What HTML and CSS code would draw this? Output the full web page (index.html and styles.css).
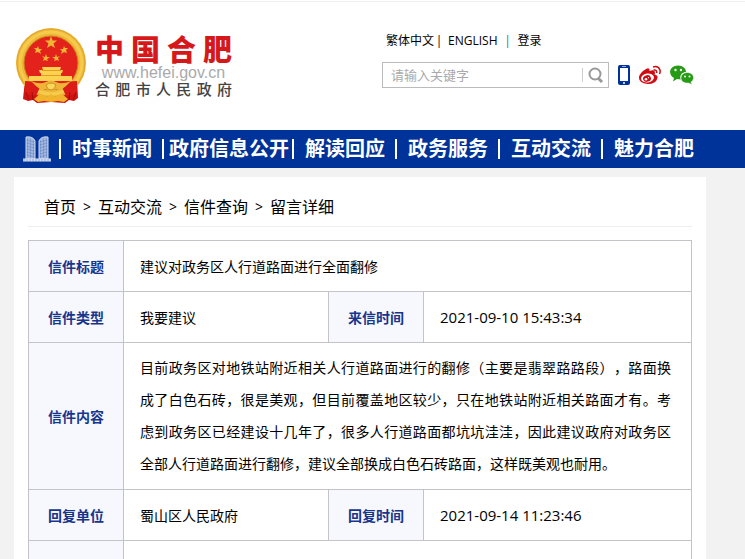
FILE: index.html
```html
<!DOCTYPE html>
<html lang="zh-CN">

<head>
    <meta charset="UTF-8">
    <title>留言详细</title>
    <link rel="stylesheet" href="styles.css">
</head>

<body>
    <header class="header">
        <a href="#" class="logo">
            <svg class="emblem" viewBox="0 0 72 77" width="72" height="77" aria-hidden="true">
                <path d="M10 53 L8 72 L13 74 L18 73 L22 76 L36 75 L50 76 L54 73 L59 74 L63 71 L62 53 Z" fill="#cf1512" />
                <circle cx="36" cy="36" r="35" fill="#eeb93a" />
                <circle cx="36" cy="36" r="34" fill="none" stroke="#e0a52c" stroke-width="1" />
                <circle cx="36" cy="36" r="31" fill="none" stroke="#f6cb4c" stroke-width="3" />
                <circle cx="36" cy="36" r="27" fill="#e3231b" stroke="#c8851c" stroke-width="1" />
                <g fill="#f0b535">
                    <path d="M36 9 L37.500 13.500 L42 13.500 L38.500 16.500 L40 21 L36 18.500 L32 21 L33.500 16.500 L30 13.500 L34.500 13.500 Z" />
                    <path d="M23 19 L24 22 L27 22 L25 24 L26 27 L23 25 L20 26 L21 23 L19 21 L22 21 Z" />
                    <path d="M49 19 L48 22 L45 22 L47 24 L46 27 L49 25 L52 26 L51 23 L53 21 L50 21 Z" />
                    <path d="M31 27 L32 30 L35 30 L32 32 L33 34 L30 33 L28 34 L29 31 L27 29 L30 30 Z" />
                    <path d="M41 27 L40 30 L37 30 L40 32 L39 34 L42 33 L44 34 L43 31 L45 29 L42 30 Z" />
                </g>
                <g fill="#fbd351">
                    <path d="M27 40 H46 L45 43 H48 L47 46 H25 L24 43 H28 Z" />
                    <path d="M26 45 H46 V49 H57 V54 H14 V49 H26 Z" />
                </g>
                <path d="M27 43.500 H46 M26 48.500 H46" stroke="#e79a24" />
                <path d="M10 54 Q19 54 26 58 L21 69 L10 66 Z M62 54 Q53 54 46 58 L51 69 L62 66 Z" fill="#dc1c16" />
                <path d="M16 54 Q25 58 31 55 Q36 52 41 55 Q47 58 56 54 L51 59 L46 63 L41 62 L36 65 L31 62 L26 63 L21 59 Z" fill="#eeb536" />
                <path d="M31 58 Q36 54 41 58 L39 62 L36 63 L33 62 Z" fill="#fad65a" stroke="#cf8f28" />
                <path d="M19 72 L25 67 L32 70 L36 67 L40 70 L47 67 L53 72 L49 75 L43 74 L36 75 L29 74 L23 75 Z" fill="#f1b52d" />
                <path d="M11 65 L14 73 M17 65 L18 73 M61 65 L58 73 M55 65 L54 73" stroke="#a50d0c" />
            </svg>
            <span class="logo-text">
                <strong class="logo-name">中国合肥</strong>
                <span class="logo-url">www.hefei.gov.cn</span>
                <span class="logo-gov">合肥市人民政府</span>
            </span>
        </a>
        <div class="tools">
            <div class="top-links">
                <a href="#">繁体中文</a><span class="bar">|</span>
                <a href="#" class="english">ENGLISH</a><span class="bar blue">|</span>
                <a href="#">登录</a>
            </div>
            <div class="tool-row">
                <form class="search">
                    <input type="text" placeholder="请输入关键字" aria-label="请输入关键字">
                    <button type="submit" aria-label="搜索">
                        <svg viewBox="0 0 16 16" width="16" height="16" fill="none" stroke="#999" stroke-width="2">
                            <circle cx="7" cy="7" r="5.500" />
                            <path d="M10 11 L14 15" stroke-width="3" />
                        </svg>
                    </button>
                </form>
                <a href="#" class="mobile" aria-label="手机版">
                    <svg viewBox="0 0 12 20" width="12" height="20">
                        <rect width="12" height="20" rx="2" fill="#039" />
                        <rect x="2" y="3" width="8" height="13" fill="#fff" />
                        <path d="M4 1.500 H8" stroke="#9ab0dc" />
                        <circle cx="6" cy="18" r="1" fill="#fff" />
                    </svg>
                </a>
                <a href="#" class="weibo" aria-label="微博">
                    <svg viewBox="0 0 22 20" width="22" height="20">
                        <path d="M0 13 Q0 8 7 4 Q11 2 10.500 6 Q16 4 16 8 L15.500 9.500 Q19 10 18.500 13 Q17 19 8.500 19 Q0 18 0 13 Z" fill="#d00b12" />
                        <ellipse cx="8.500" cy="13" rx="6.500" ry="4.500" transform="rotate(-8 8.500 13)" fill="#fff" />
                        <ellipse cx="8" cy="13.500" rx="4" ry="3.300" transform="rotate(-20 8 13.500)" fill="#d00b12" />
                        <circle cx="7" cy="14.300" r="1.300" fill="#fff" />
                        <circle cx="9.500" cy="12.700" r=".6" fill="#fff" />
                        <path d="M14 2 Q19 0 21 5 Q21.500 7 20.500 9 M14.500 5 Q18 4.500 17.700 8" fill="none" stroke="#d00b12" stroke-width="1.500" />
                    </svg>
                </a>
                <a href="#" class="wechat" aria-label="微信">
                    <svg viewBox="0 0 24 20" width="24" height="20">
                        <path d="M8 0.500 C13 .5 16 3.500 16 7 C12 7 9 11 11 14.500 L7 14 L3 16.500 L4 13 C-3 9 0 .5 8 .5 Z" fill="#289b16" />
                        <path d="M17 7.500 C22 7.500 24 11 23.500 13.500 Q23 16 21 17 L22 19.500 L18.500 18 C13 18.500 11 15.500 11 13 Q11 8 17 7.500 Z" fill="#289b16" stroke="#fff" stroke-width=".5" />
                        <g fill="#fff">
                            <circle cx="5.500" cy="5" r="1.200" />
                            <circle cx="11" cy="5" r="1.200" />
                            <circle cx="15" cy="11.500" r="1" />
                            <circle cx="19.500" cy="11.500" r="1" />
                        </g>
                    </svg>
                </a>
            </div>
        </div>
    </header>

    <nav class="nav">
        <svg class="towers" viewBox="0 0 28 26" width="28" height="26" aria-hidden="true">
            <path d="M3 1 Q10 0 12 5 V23 H3 Z M25 1 Q18 0 16 5 V23 H25 Z" fill="#8ea6d4" stroke="#d0dbee" />
            <path d="M4 4 L11 6 M4 7 L11 9 M4 10 L11 12 M4 13 L11 15 M4 16 L11 18 M4 19 L11 21 M24 4 L17 6 M24 7 L17 9 M24 10 L17 12 M24 13 L17 15 M24 16 L17 18 M24 19 L17 21" stroke="#5c7cc0" />
            <path d="M6 1 V23 M9 2 V23 M22 1 V23 M19 2 V23" stroke="#b3c4e4" />
            <path d="M0 24 H28" stroke="#d5def0" stroke-width="3" />
            <path d="M0 24 H28" stroke="#8ea6d4" stroke-dasharray="2 1" />
        </svg>
        <ul>
            <li><a href="#">时事新闻</a></li>
            <li class="tight"><a href="#">政府信息公开</a></li>
            <li><a href="#">解读回应</a></li>
            <li><a href="#">政务服务</a></li>
            <li><a href="#">互动交流</a></li>
            <li><a href="#">魅力合肥</a></li>
        </ul>
    </nav>

    <main class="container">
        <div class="breadcrumb">
            <a href="#">首页</a><span>&gt;</span><a href="#">互动交流</a><span>&gt;</span><a href="#">信件查询</a><span>&gt;</span><a href="#">留言详细</a>
        </div>
        <table class="letter">
            <colgroup>
                <col class="col-label">
                <col class="col-value">
                <col class="col-label">
                <col>
            </colgroup>
            <tr>
                <th scope="row">信件标题</th>
                <td colspan="3">建议对政务区人行道路面进行全面翻修</td>
            </tr>
            <tr>
                <th scope="row">信件类型</th>
                <td>我要建议</td>
                <th scope="row">来信时间</th>
                <td class="date">2021-09-10 15:43:34</td>
            </tr>
            <tr>
                <th scope="row">信件内容</th>
                <td colspan="3" class="content">目前政务区对地铁站附近相关人行道路面进行的翻修（主要是翡翠路路段），路面换成了白色石砖，很是美观，但目前覆盖地区较少，只在地铁站附近相关路面才有。考虑到政务区已经建设十几年了，很多人行道路面都坑坑洼洼，因此建议政府对政务区全部人行道路面进行翻修，建议全部换成白色石砖路面，这样既美观也耐用。</td>
            </tr>
            <tr>
                <th scope="row">回复单位</th>
                <td>蜀山区人民政府</td>
                <th scope="row">回复时间</th>
                <td class="date">2021-09-14 11:23:46</td>
            </tr>
            <tr>
                <th></th>
                <td colspan="3"></td>
            </tr>
        </table>
    </main>
</body>

</html>
```

FILE: styles.css
```css
* {
    box-sizing: border-box;
}

body {
    display: flex;
    flex-direction: column;
    height: 100vh;
    margin: 0;
    background-color: #f2f2f2;
    color: #000;
    font-family: "Open Sans", "Noto Sans CJK SC", sans-serif;
    font-size: 14px;
}

a {
    color: inherit;
    text-decoration: none;
}

svg {
    display: block;
}

/* Header */
.header {
    display: flex;
    flex-shrink: 0;
    height: 130px;
    padding-top: 26px;
    padding-left: 15px;
    background: linear-gradient(#fff 1px, #eee 1px, #eee 2px, #fff 2px);
}

.logo {
    display: flex;
    gap: 8px;
    align-self: flex-start;
}

.emblem {
    margin-top: 1px;
}

.logo-text {
    display: flex;
    flex-direction: column;
    width: 137px;
    padding-top: 8px;
}

.logo-name {
    color: #d7181b;
    font-size: 29px;
    font-weight: 900;
    line-height: 32px;
    text-align-last: justify;
}

.logo-url {
    color: #aaa;
    font-family: "Liberation Sans", sans-serif;
    font-size: 16px;
    line-height: 14px;
    text-align: center;
}

.logo-gov {
    color: #444;
    font-size: 15px;
    font-weight: 500;
    line-height: 18px;
    text-align-last: justify;
}

.tools {
    margin-left: 150px;
}

.top-links {
    display: flex;
    padding-left: 4px;
    font-size: 12px;
    line-height: 30px;
}

.bar {
    width: 10px;
    text-align: center;
}

.english {
    margin-left: 4px;
}

.blue {
    width: 20px;
    color: #0080b0;
}

.tool-row {
    display: flex;
    align-items: center;
    margin-top: 6px;
}

.search {
    display: flex;
    align-items: center;
    width: 227px;
    height: 26px;
    border: 1px solid #bbb;
}

.search input {
    flex: 1;
    min-width: 0;
    padding: 0 8px;
    border: none;
    outline: none;
    background: none;
    font-family: inherit;
    font-size: 13px;
}

.search input::placeholder {
    color: #aaa;
}

.search button {
    height: 14px;
    display: flex;
    align-items: center;
    padding: 0 4px 0 5px;
    border: none;
    border-left: 1px solid #ccc;
    background: none;
}

.mobile,
.weibo,
.wechat {
    margin-left: 9px;
}

/* Navigation bar */
.nav {
    display: flex;
    flex-shrink: 0;
    align-items: center;
    height: 38px;
    padding-left: 23px;
    background-color: #039;
    color: #fff;
}

.nav ul {
    display: flex;
    margin: 0;
    padding-left: 8px;
    list-style: none;
}

.nav li {
    display: flex;
    align-items: center;
    padding-right: 10px;
    font-size: 20px;
    font-weight: bold;
    line-height: 38px;
    white-space: nowrap;
}

.nav li::before {
    content: "";
    width: 2px;
    height: 20px;
    margin-right: 11px;
    background-color: #fff;
}

.nav .tight {
    padding-right: 3px;
}

.nav .tight::before {
    margin-right: 5px;
}

/* Main content */
.container {
    flex: 1;
    min-height: 0;
    margin: 9px 39px 0 14px;
    padding: 0 14px;
    overflow: hidden;
    background-color: #fff;
}

.breadcrumb {
    display: flex;
    height: 50px;
    padding: 10px 16px 0;
    border-bottom: 1px solid #eee;
    font-size: 16px;
    line-height: 40px;
}

.breadcrumb span {
    width: 22px;
    font-size: 14px;
    text-align: center;
}

/* Letter table */
.letter {
    width: 100%;
    margin-top: 13px;
    border-collapse: collapse;
    table-layout: fixed;
}

.col-label {
    width: 95px;
}

.col-value {
    width: 205px;
}

.letter th,
.letter td {
    height: 51px;
    padding: 0 16px;
    border: 1px solid #c4c4c8;
    text-align: left;
}

.letter th {
    padding: 0;
    background-color: #f7f8fd;
    color: #18358c;
    text-align: center;
}

.letter .date {
    font-size: 15px;
}

.letter .content {
    padding: 9px 20px 9px 16px;
    line-height: 32px;
    text-align: justify;
    text-spacing-trim: space-all;
}
```
